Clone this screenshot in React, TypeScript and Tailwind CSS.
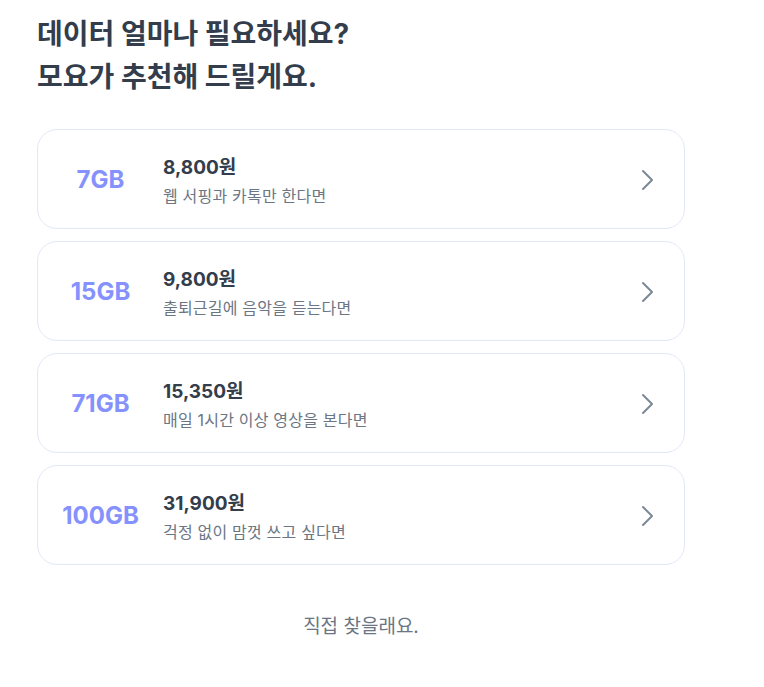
import React from "react";

const plans = [
  { gb: "7GB", price: "8,800원", desc: "웹 서핑과 카톡만 한다면" },
  { gb: "15GB", price: "9,800원", desc: "출퇴근길에 음악을 듣는다면" },
  { gb: "71GB", price: "15,350원", desc: "매일 1시간 이상 영상을 본다면" },
  { gb: "100GB", price: "31,900원", desc: "걱정 없이 맘껏 쓰고 싶다면" },
];

export default function App() {
  return (
    <div
      className="min-h-[687px] w-[764px] bg-white"
      style={{ fontFamily: 'Inter, "Noto Sans CJK KR", sans-serif' }}
    >
      <div className="w-[648px] ml-[37px] pt-[13px]">
        <h1 className="text-[28px] leading-[43px] font-bold text-[#333d4b]">
          데이터 얼마나 필요하세요?
          <br />
          모요가 추천해 드릴게요.
        </h1>
        <div className="mt-[30px] flex flex-col gap-[12px]">
          {plans.map((p) => (
            <div
              key={p.gb}
              className="h-[100px] rounded-[20px] border border-[#e3e8f7] bg-white flex items-center"
            >
              <div className="w-[125px] pt-[2px] text-center text-[24px] font-bold text-[#8591fd]">
                {p.gb}
              </div>
              <div className="flex-1 flex flex-col pt-[4px]">
                <div className="text-[19px] leading-[26px] font-bold text-[#333d4b]">
                  {p.price}
                </div>
                <div className="mt-[4px] text-[16px] tracking-[0.2px] leading-[22px] text-[#6b7684]">
                  {p.desc}
                </div>
              </div>
              <svg
                width="14"
                height="22"
                viewBox="0 0 14 22"
                fill="none"
                stroke="#7e8894"
                strokeWidth="2"
                strokeLinecap="round"
                strokeLinejoin="round"
                className="mr-[30px] mt-[2px]"
              >
                <path d="M3 2l9 9-9 9" />
              </svg>
            </div>
          ))}
        </div>
        <div className="mt-[50px] text-center text-[19px] leading-[24px] text-[#6b7684]">
          직접 찾을래요.
        </div>
      </div>
    </div>
  );
}
